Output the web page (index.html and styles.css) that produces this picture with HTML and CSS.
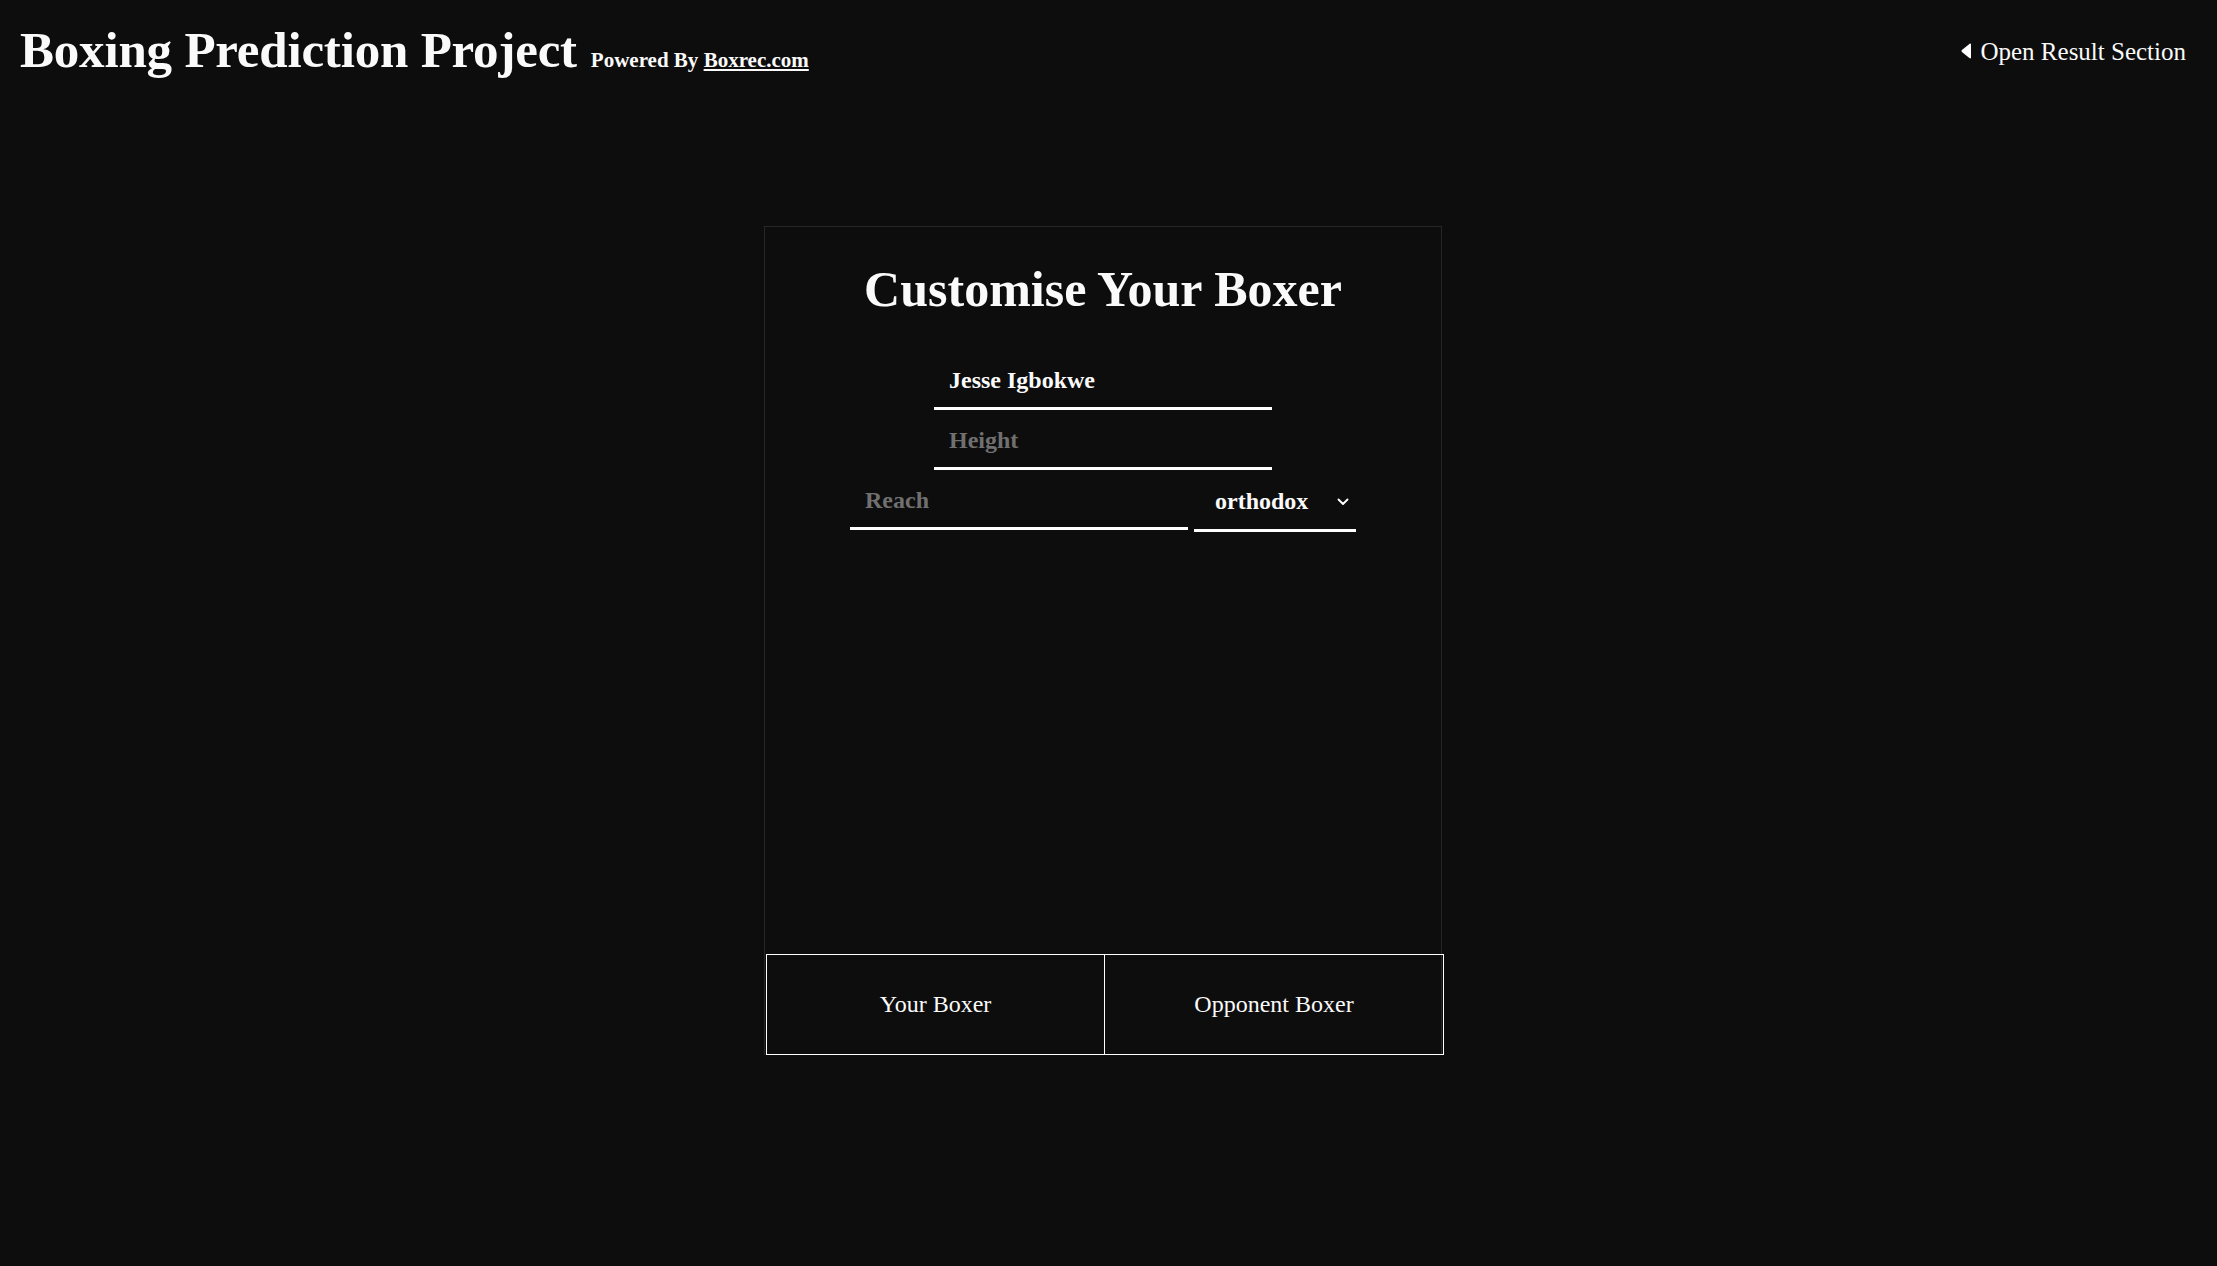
FILE: index.html
```html
<!DOCTYPE html>
<html lang="en">
<head>
<meta charset="utf-8">
<title>Boxing Prediction Project</title>
<link rel="stylesheet" href="styles.css">
</head>
<body>
<header class="topbar">
  <div class="brand">
    <h1 class="brand-title">Boxing Prediction Project</h1>
    <span class="brand-sub">Powered By <a href="#" class="brand-link">Boxrec.com</a></span>
  </div>
  <button class="result-toggle" type="button">
    <svg class="result-icon" width="10" height="16" viewBox="0 0 10 16" aria-hidden="true">
      <path d="M8.4 0.9 C9.2 0.2 10 0.6 10 1.6 V14.4 C10 15.4 9.2 15.8 8.4 15.1 L1.2 9.2 C0.2 8.5 0.2 7.5 1.2 6.8 Z" fill="#fff"/>
    </svg>
    <span>Open Result Section</span>
  </button>
</header>
<main class="main">
  <section class="card">
    <h2 class="card-title">Customise Your Boxer</h2>
    <form class="form">
      <input class="field field-wide filled" type="text" value="Jesse Igbokwe">
      <input class="field field-wide" type="text" placeholder="Height">
      <div class="form-row">
        <input class="field field-wide" type="text" placeholder="Reach">
        <div class="select">
          <span>orthodox</span>
          <svg width="12" height="8" viewBox="0 0 12 8" aria-hidden="true">
            <path d="M1.5 1.5 L6 6 L10.5 1.5" fill="none" stroke="#fff" stroke-width="1.9" stroke-linecap="round" stroke-linejoin="round"/>
          </svg>
        </div>
      </div>
    </form>
    <div class="tabs">
      <button class="tab" type="button">Your Boxer</button>
      <button class="tab" type="button">Opponent Boxer</button>
    </div>
  </section>
</main>
</body>
</html>
```
FILE: styles.css
```css
* { box-sizing: border-box; }

html, body {
  margin: 0;
  padding: 0;
  background: #0d0d0d;
  color: #fafafa;
  font-family: "Liberation Serif", "Times New Roman", serif;
}

body {
  min-height: 1266px;
}

.topbar {
  display: flex;
  justify-content: space-between;
  align-items: flex-start;
  padding: 25px 31px 0 20px;
}

.brand {
  display: flex;
  align-items: baseline;
  gap: 14px;
}

.brand-title {
  margin: 0;
  font-size: 51px;
  line-height: 1;
  font-weight: 700;
  letter-spacing: -0.2px;
}

.brand-sub {
  font-size: 21px;
  font-weight: 700;
  line-height: 1;
}

.brand-link {
  color: #fafafa;
  text-decoration: underline;
  text-underline-offset: 2px;
}

.result-toggle {
  margin-top: 14px;
  display: flex;
  align-items: center;
  gap: 9px;
  background: none;
  border: 0;
  padding: 0;
  color: #fafafa;
  font-family: inherit;
  font-size: 25px;
  line-height: 1;
  cursor: pointer;
}

.result-icon {
  margin-top: -2px;
}

.main {
  display: flex;
  justify-content: center;
  padding: 150px 11px 0 0;
}

.card {
  width: 678px;
  height: 829px;
  border: 1px solid #262626;
  border-bottom: 0;
  display: flex;
  flex-direction: column;
  align-items: center;
  padding-top: 37px;
}

.card-title {
  margin: 0;
  font-size: 50px;
  line-height: 1;
  font-weight: 700;
}

.form {
  margin-top: 36px;
  display: flex;
  flex-direction: column;
  align-items: center;
}

.form-row {
  display: flex;
  gap: 6px;
  align-items: flex-start;
}

.field {
  height: 60px;
  width: 338px;
  background: transparent;
  border: 0;
  border-bottom: 3px solid #fff;
  padding: 3px 15px 0;
  color: #fafafa;
  font-family: inherit;
  font-size: 24px;
  font-weight: 700;
  outline: none;
}

.field::placeholder {
  color: #707070;
  opacity: 1;
}

.select {
  width: 162px;
  height: 62px;
  border-bottom: 3px solid #fff;
  display: flex;
  align-items: center;
  justify-content: space-between;
  padding: 4px 7px 0 21px;
  font-size: 24px;
  font-weight: 700;
}

.tabs {
  margin-top: auto;
  width: 678px;
  display: flex;
  border: 1px solid #fff;
  margin-left: 2px;
  margin-right: -2px;
}

.tab {
  flex: 1;
  height: 99px;
  background: transparent;
  border: 0;
  color: #fafafa;
  font-family: inherit;
  font-size: 24px;
  cursor: pointer;
}

.tab:first-child {
  flex: 0 0 337px;
}

.tab + .tab {
  border-left: 1px solid #fff;
}
```
